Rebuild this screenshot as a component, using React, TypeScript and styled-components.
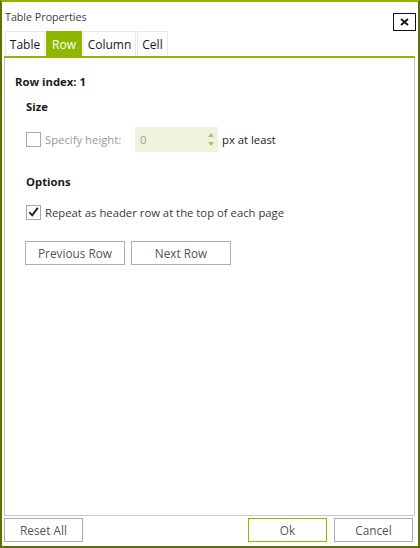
import { createGlobalStyle, styled } from "styled-components";

const GlobalStyle = createGlobalStyle`
  html, body {
    margin: 0;
    padding: 0;
    background: #ffffff;
  }
  body {
    font-family: "Open Sans", "Noto Sans", "Liberation Sans", sans-serif;
    font-size: 11.3px;
    color: #333333;
  }
`;

const GREEN = "#8fb700";

type TabDef = { label: string; width: number };

const tabs: TabDef[] = [
  { label: "Table", width: 40 },
  { label: "Row", width: 36 },
  { label: "Column", width: 53 },
  { label: "Cell", width: 31 },
];

function CheckMark() {
  return (
    <svg width="14" height="14" viewBox="0 0 14 14">
      <path
        d="M2.5 7.2 L5.6 10.6 L11.6 2.6"
        fill="none"
        stroke="#1e1e1e"
        strokeWidth="2"
      />
    </svg>
  );
}

export default function App() {
  return (
    <>
      <GlobalStyle />
      <StyledWindow>
        <StyledTitleBar>
          <StyledTitle>Table Properties</StyledTitle>
          <StyledCloseButton aria-label="Close">
            <svg width="9" height="8" viewBox="0 0 9 8">
              <path d="M1 1 L8 7 M8 1 L1 7" stroke="#111" strokeWidth="1.8" />
            </svg>
          </StyledCloseButton>
        </StyledTitleBar>

        <StyledTabStrip>
          {tabs.map((t) => (
            <StyledTab key={t.label} $width={t.width} $selected={t.label === "Row"}>
              {t.label}
            </StyledTab>
          ))}
        </StyledTabStrip>

        <StyledPanel>
          <StyledHeading>Row index: 1</StyledHeading>

          <StyledSection>
            <StyledSectionTitle>Size</StyledSectionTitle>
            <StyledFieldRow>
              <StyledCheckBox />
              <StyledMutedLabel>Specify height:</StyledMutedLabel>
              <StyledNumeric>
                <StyledNumericValue>0</StyledNumericValue>
                <StyledSpinner>
                  <StyledArrow $up />
                  <StyledArrow />
                </StyledSpinner>
              </StyledNumeric>
              <StyledLabel>px at least</StyledLabel>
            </StyledFieldRow>

            <StyledSectionTitle $gap={22}>Options</StyledSectionTitle>
            <StyledCheckRow>
              <StyledCheckBox>
                <CheckMark />
              </StyledCheckBox>
              <StyledCheckLabel>Repeat as header row at the top of each page</StyledCheckLabel>
            </StyledCheckRow>

            <StyledButtonRow>
              <StyledButton $width={100}>Previous Row</StyledButton>
              <StyledButton $width={100}>Next Row</StyledButton>
            </StyledButtonRow>
          </StyledSection>
        </StyledPanel>

        <StyledFooter>
          <StyledButton $width={79}>Reset All</StyledButton>
          <StyledFooterRight>
            <StyledButton $width={79} $primary>
              Ok
            </StyledButton>
            <StyledButton $width={79}>Cancel</StyledButton>
          </StyledFooterRight>
        </StyledFooter>
      </StyledWindow>
    </>
  );
}

// Styled components
const StyledWindow = styled.div`
  width: 420px;
  height: 548px;
  box-sizing: border-box;
  border: 2px solid #5e7100;
  border-top-color: ${GREEN};
  background: #ffffff;
  display: flex;
  flex-direction: column;
`;

const StyledTitleBar = styled.div`
  height: 29px;
  display: flex;
  justify-content: space-between;
  align-items: flex-start;
  padding-left: 3px;
`;

const StyledTitle = styled.div`
  padding-top: 7px;
  line-height: 16px;
  font-size: 10.7px;
  color: #3c3c3c;
`;

const StyledCloseButton = styled.div`
  width: 23px;
  height: 18px;
  box-sizing: border-box;
  margin-top: 11px;
  margin-right: 2px;
  border: 1px solid #111111;
  display: flex;
  align-items: center;
  justify-content: center;
`;

const StyledTabStrip = styled.div`
  display: flex;
  gap: 1px;
  margin: 0 3px 0 2px;
  padding-left: 1px;
  border-bottom: 2px solid ${GREEN};
`;

const StyledTab = styled.div<{ $width: number; $selected?: boolean }>`
  width: ${(p) => p.$width}px;
  height: 25px;
  box-sizing: border-box;
  display: flex;
  align-items: center;
  justify-content: center;
  border: 1px solid ${(p) => (p.$selected ? GREEN : "#e8e8e8")};
  border-bottom: none;
  background: ${(p) => (p.$selected ? GREEN : "#ffffff")};
  color: ${(p) => (p.$selected ? "#ffffff" : "#1a1a1a")};
  font-size: 12px;
  padding-top: 1px;
`;

const StyledPanel = styled.div`
  flex: 1;
  margin: 0 3px 0 2px;
  border: 1px solid #c8c8c8;
  border-top: none;
  padding: 16px 0 0 10px;
  display: flex;
  flex-direction: column;
`;

const StyledHeading = styled.div`
  font-weight: 700;
  line-height: 16px;
  color: #1a1a1a;
`;

const StyledSection = styled.div`
  padding-left: 11px;
  display: flex;
  flex-direction: column;
`;

const StyledSectionTitle = styled.div<{ $gap?: number }>`
  margin-top: ${(p) => p.$gap ?? 9}px;
  font-weight: 700;
  line-height: 16px;
  color: #1a1a1a;
`;

const StyledFieldRow = styled.div`
  margin-top: 12px;
  display: flex;
  align-items: center;
  height: 25px;
`;

const StyledCheckBox = styled.div`
  width: 15px;
  height: 15px;
  box-sizing: border-box;
  border: 1px solid #a8a8a8;
  background: #ffffff;
  display: flex;
  align-items: center;
  justify-content: center;
  flex-shrink: 0;
`;

const StyledMutedLabel = styled.span`
  margin-left: 4px;
  width: 90px;
  color: #9b9b9b;
`;

const StyledLabel = styled.span`
  margin-left: 4px;
  color: #1a1a1a;
`;

const StyledNumeric = styled.div`
  width: 83px;
  height: 25px;
  box-sizing: border-box;
  background: #eef3dd;
  display: flex;
  align-items: center;
  padding: 0 4px 0 5px;
`;

const StyledNumericValue = styled.span`
  flex: 1;
  color: #a0a0a0;
`;

const StyledSpinner = styled.div`
  display: flex;
  flex-direction: column;
  gap: 5px;
`;

const StyledArrow = styled.div<{ $up?: boolean }>`
  width: 0;
  height: 0;
  border-left: 3px solid transparent;
  border-right: 3px solid transparent;
  ${(p) =>
    p.$up ? "border-bottom: 4px solid #a9c46a;" : "border-top: 4px solid #a9c46a;"}
`;

const StyledCheckRow = styled.div`
  margin-top: 14px;
  display: flex;
  align-items: center;
  height: 16px;
`;

const StyledCheckLabel = styled.span`
  margin-left: 4px;
  color: #3a3a3a;
`;

const StyledButtonRow = styled.div`
  margin-top: 21px;
  margin-left: -1px;
  display: flex;
  gap: 6px;
`;

const StyledButton = styled.div<{ $width: number; $primary?: boolean }>`
  width: ${(p) => p.$width}px;
  height: 24px;
  box-sizing: border-box;
  border: 1px solid ${(p) => (p.$primary ? "#8cb800" : "#adadad")};
  background: #ffffff;
  color: #555555;
  font-size: 11.8px;
  display: flex;
  align-items: center;
  justify-content: center;
`;

const StyledFooter = styled.div`
  height: 30px;
  box-sizing: border-box;
  padding: 2px 5px 4px 2px;
  display: flex;
  justify-content: space-between;
`;

const StyledFooterRight = styled.div`
  display: flex;
  gap: 7px;
`;
